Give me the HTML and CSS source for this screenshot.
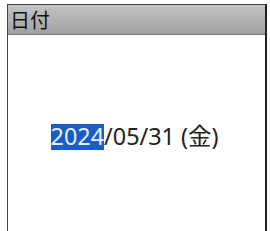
FILE: index.html
```html
<!DOCTYPE html>
<html lang="ja">

<head>
  <meta charset="UTF-8">
  <meta name="viewport" content="width=device-width, initial-scale=1.0">
  <title>日付</title>
  <link rel="stylesheet" href="styles.css">
</head>

<body>
  <div class="panel">
    <div class="panel-header">日付</div>
    <div class="panel-body">
      <p class="date-value"><span class="selected">2024</span>/05/31 (金)</p>
    </div>
  </div>
</body>

</html>
```

FILE: styles.css
```css
html,
body {
  height: 100%;
}

body {
  margin: 0;
  padding: 4px 3px 0 7px;
  box-sizing: border-box;
  overflow: hidden;
  background-color: #fff;
  font-family: "Noto Sans", "Noto Sans CJK JP", sans-serif;
}

.panel {
  height: 100%;
  border: 1px solid #444;
  border-right: 2px solid #222;
  border-bottom: none;
  display: flex;
  flex-direction: column;
}

.panel-header {
  height: 29px;
  padding-left: 2px;
  background: linear-gradient(to bottom, #c4c4c4, #a0a0a0);
  border-bottom: 1px solid #777;
  font-family: "Noto Sans CJK JP", sans-serif;
  font-size: 20px;
  line-height: 29px;
  color: #111;
}

.panel-body {
  flex: 1;
  display: flex;
  justify-content: center;
  padding: 89px 4px 0 0;
}

.date-value {
  margin: 0;
  font-size: 23.4px;
  line-height: 24px;
  color: #222;
}

.selected {
  display: inline-block;
  padding-bottom: 2px;
  background-color: #1a5cc8;
  color: #e8f0ff;
}
```
